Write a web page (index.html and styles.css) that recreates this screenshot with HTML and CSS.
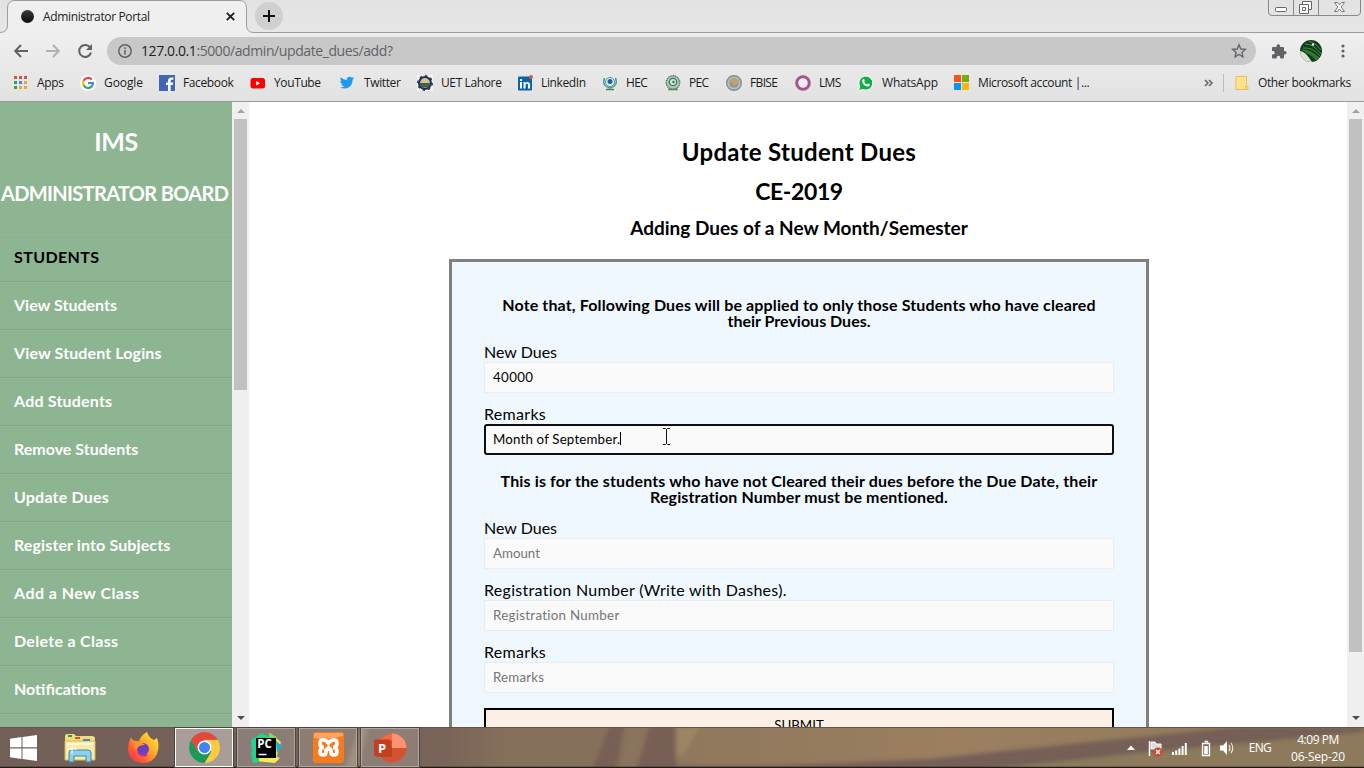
FILE: index.html
```html
<!DOCTYPE html>
<html lang="en">
<head>
<meta charset="utf-8">
<title>Administrator Portal</title>
<link rel="stylesheet" href="styles.css">
</head>
<body>
<div class="screen">
  <header class="browser">
    <div class="tabstrip">
      <svg class="tab-shape" width="1364" height="34" viewBox="0 0 1364 34"><path d="M0 32.5Q7.500 32.500 7.500 25V8Q7.500 .5 15 .5H239Q246.500 .5 246.500 8V25Q246.500 32.500 254 32.500H1364V34H0Z" fill="#efefef"/><path d="M0 32.500Q7.500 32.500 7.500 25V8Q7.500 .5 15 .5H239Q246.500 .5 246.500 8V25Q246.500 32.500 254 32.500H1364" fill="none" stroke="#9d9d9d"/></svg>
      <div class="tab"><i class="favicon"></i><span class="tab-title">Administrator Portal</span>
        <svg class="tab-close" width="9" height="9" viewBox="0 0 9 9"><path d="M.8.8l7.400 7.400M8.200.8L.8 8.200" stroke="#1c1c1c" stroke-width="1.800"/></svg></div>
      <div class="newtab"><svg width="12" height="12" viewBox="0 0 12 12"><path d="M6 0v12M0 6h12" stroke="#111" stroke-width="2"/></svg></div>
      <svg class="win-controls" width="94" height="17" viewBox="0 0 94 17"><path d="M.5 0v12q0 3.500 3.500 3.500h85q3.500 0 3.500-3.500V0M25.500 0v15.500M50.500 0v15.500" fill="none" stroke="#898989"/><rect x="7.500" y="7.500" width="11" height="4" rx="1" fill="#fff" stroke="#666"/><path d="M34.500 4.500v-3h9v8h-3" fill="#fff" stroke="#666"/><path d="M31.500 4.500h9v9h-9z" fill="#fff" stroke="#666"/><path d="M34.500 7.500h3v3h-3z" fill="#fff" stroke="#666"/><path d="M66.500 2.500h3l2 2.500 2-2.500h3l-3.300 4.500 3.300 4.500h-3l-2-2.500-2 2.500h-3L69.800 7z" fill="#fff" stroke="#777"/></svg>
    </div>
    <div class="toolbar">
      <svg width="14" height="14" viewBox="0 0 14 14"><path d="M14 7H1.500M7 1L1.200 7 7 13" fill="none" stroke="#5f6368" stroke-width="2"/></svg>
      <svg width="14" height="14" viewBox="0 0 14 14"><path d="M0 7h12.500M7 1l5.800 6L7 13" fill="none" stroke="#b0b1b3" stroke-width="2"/></svg>
      <svg width="14" height="14" viewBox="0 0 14 14"><path d="M12.300 3.800A6 6 0 1 0 13 8.500" fill="none" stroke="#5f6368" stroke-width="2"/><path d="M14 0v6H8z" fill="#5f6368"/></svg>
      <div class="omnibox">
        <svg width="14" height="14" viewBox="0 0 14 14"><circle cx="7" cy="7" r="6.200" fill="none" stroke="#5f6368" stroke-width="1.500"/><path d="M7 6v4.500M7 3.300v1.600" stroke="#5f6368" stroke-width="1.600"/></svg>
        <span class="url"><b>127.0.0.1</b>:5000/admin/update_dues/add?</span>
        <svg class="star" width="16" height="16" viewBox="0 0 16 16"><path d="M8 1.800l1.800 4.200 4.500.4-3.400 3 1 4.400L8 11.500l-3.900 2.300 1-4.400-3.400-3 4.500-.4z" fill="none" stroke="#5f6368" stroke-width="1.400"/></svg>
      </div>
      <svg class="ext" width="16" height="16" viewBox="0 0 16 16"><path d="M2 4h3.500V3a1.800 1.800 0 0 1 3.600 0v1h2.900q1 0 1 1v2.900h.8a1.800 1.800 0 0 1 0 3.600H13V14.500q0 1-1 1H9.300V14.500a1.800 1.800 0 0 0-3.600 0v1H2q-1 0-1-1V11.500h1a1.800 1.800 0 0 0 0-3.600H1V5q0-1 1-1z" fill="#5f6368"/></svg>
      <svg class="avatar" width="22" height="22" viewBox="0 0 22 22"><defs><clipPath id="av"><circle cx="11" cy="11" r="11"/></clipPath></defs><g clip-path="url(#av)"><path d="M0 0h22v22H0z" fill="#123d1d"/><path d="M0 11q5 0 12 11H0z" fill="#dfe0cf"/><path d="M2 10q9 0 18 9M3 8q10-1 17 8M5 4q9 0 16 10M9 1q8 3 12 9" fill="none" stroke="#4f9152"/><path d="M5 11q8 2 14 11" fill="none" stroke="#2f7b26" stroke-width="3"/><circle cx="13" cy="4.500" r="1.200" fill="#eee"/></g></svg>
      <svg class="dots" width="4" height="14" viewBox="0 0 4 14" fill="#5f6368"><circle cx="2" cy="2" r="1.600"/><circle cx="2" cy="7" r="1.600"/><circle cx="2" cy="12" r="1.600"/></svg>
    </div>
    <nav class="bookmarks">
      <a><svg viewBox="0 0 16 16"><path d="M1 1h3v3H1zM6 1h3v3H6zM11 1h3v3h-3z" fill="#dd5144"/><path d="M1 6h3v3H1zM1 11h3v3H1z" fill="#2da05a"/><path d="M6 6h3v3H6z" fill="#4285f4"/><path d="M11 6h3v3h-3zM11 11h3v3h-3zM6 11h3v3H6z" fill="#e5a93b"/></svg><span>Apps</span></a>
      <a class="google"><svg viewBox="0 0 16 16"><circle cx="8" cy="8" r="8" fill="#fff"/><g fill="none" stroke-width="2.200"><path d="M11.800 4.500A5 5 0 0 0 3.600 5.800" stroke="#ea4335"/><path d="M3.600 5.800a5 5 0 0 0 0 4.500" stroke="#fbbc05"/><path d="M3.600 10.300a5 5 0 0 0 8 1.300" stroke="#34a853"/><path d="M11.500 11.600A5 5 0 0 0 13 8H8" stroke="#4285f4"/></g></svg><span>Google</span></a>
      <a><svg viewBox="0 0 16 16"><path d="M0 0h16v16H0z" fill="#4267b2"/><path d="M9 16v-6H7V7.600h2V6q0-3.500 3.400-3.500h2v2.300H13q-1.400 0-1.400 1.400v1.400h2.600L13.800 10h-2.200v6z" fill="#fff"/></svg><span>Facebook</span></a>
      <a><svg viewBox="0 0 16 16"><rect x=".5" y="3" width="14.500" height="10.500" rx="2.500" fill="#f00"/><path d="M6.200 6l4 2.200-4 2.300z" fill="#fff"/></svg><span>YouTube</span></a>
      <a><svg viewBox="1 0 16 16"><path d="M-1 12.500q2.300.2 4-1.200-2.200-.3-2.700-2.200h1.200Q-.8 8.200-.7 5.900l1.200.3Q-1.400 4.500-.2 2.200 2.200 5 6 5.300 5.500 1.900 8.600 1.700q1.400 0 2.300 1 1-.2 1.800-.8-.3 1-1.200 1.700l1.500-.4q-.5.900-1.400 1.500 0 5-3.600 7.500-4.300 2.600-9 .3" transform="translate(2 0)" fill="#1d9bf0"/></svg><span>Twitter</span></a>
      <a><svg viewBox="0 0 16 16"><path d="M0 0h16v16H0z" fill="#f5f5f2"/><circle cx="8" cy="8" r="6" fill="#b8bea0" stroke="#262f55" stroke-width="2"/><circle cx="8" cy="8" r="7.300" fill="none" stroke="#262f55" stroke-width="1.400" stroke-dasharray="2.400 3.300"/><path d="M3 8h10v3q-5 3-10 0z" fill="#455d55"/><path d="M5 8V5l3-2 3 2v3z" fill="#d6c688"/></svg><span>UET Lahore</span></a>
      <a><svg viewBox="0 0 16 16"><rect x="1" y="1.500" width="14" height="14" rx="1" fill="#0a66a8"/><path d="M3 7h2v6.500H3zM3 4h2v2H3zM6.500 7h2v1q2-2 4 0 .6.700.6 1.700v3.800H11V10q0-1.500-1.200-1.500T8.600 10v3.500H6.500z" fill="#fff"/><circle cx="14" cy="2" r="2" fill="#e6523f"/></svg><span>LinkedIn</span></a>
      <a class="tight"><svg viewBox="0 0 16 16"><circle cx="8" cy="7" r="4.500" fill="#dff1ef" stroke="#5b8cae"/><circle cx="8" cy="6.500" r="2.500" fill="#1f619f"/><path d="M2.500 3Q-.5 11 8 13q8.500-2 5.500-10" fill="none" stroke="#4e9d7c" stroke-width="1.500"/><path d="M4 14.500h8" stroke="#3f8563" stroke-width="1.500"/></svg><span>HEC</span></a>
      <a class="tight"><svg viewBox="0 0 16 16"><circle cx="8" cy="7.500" r="6.700" fill="#aecbb8" stroke="#4c7c65" stroke-width="1.400" stroke-dasharray="1.500 .7"/><circle cx="8" cy="7" r="3.700" fill="#d3e3da" stroke="#447860" stroke-width="1.300"/><circle cx="8.500" cy="7" r="1.300" fill="#447860"/><path d="M3 14.500h10" stroke="#5f8775" stroke-width="1.600"/></svg><span>PEC</span></a>
      <a class="tight"><svg viewBox="0 0 16 16"><circle cx="8" cy="8" r="7.300" fill="#b9bbbb" stroke="#888d92" stroke-width="1.400"/><circle cx="8" cy="8" r="4.700" fill="#8798aa"/><path d="M3 6l5-3 5 2-2 4-3 3-2-4z" fill="#c4a168"/></svg><span>FBISE</span></a>
      <a class="tight"><svg viewBox="0 0 16 16"><circle cx="8" cy="8" r="6.300" fill="#eee" stroke="#a55490" stroke-width="3"/></svg><span>LMS</span></a>
      <a class="whatsapp"><svg viewBox="0 0 16 16"><path d="M.5 15.500l1.200-4A7 7 0 1 1 5 14.500z" fill="#16aa48" stroke="#f5fff8"/><path d="M5 4q1.500-.5 1.700 1.200L6.200 7q.8 1.800 2.700 2.600l1.100-1 2 1q-.3 2.300-2.800 1.900Q5 10.300 4.200 6.500 4.200 5 5 4" fill="#fff"/></svg><span>WhatsApp</span></a>
      <a><svg viewBox="0 0 16 16"><path d="M0 0h7v7H0z" fill="#f65314"/><path d="M8 0h7v7H8z" fill="#7cab0b"/><path d="M0 8h7v7H0z" fill="#0a93f0"/><path d="M8 8h7v7H8z" fill="#ffb60a"/></svg><span>Microsoft account |...</span></a>
      <svg class="more" viewBox="0 0 9 8"><path d="M1 1l3 3-3 3M5 1l3 3-3 3" fill="none" stroke="#5f6368" stroke-width="1.500"/></svg>
      <a class="other"><svg viewBox="0 0 16 16"><path d="M2 1.500h10.500v10h1.500v3H2z" fill="#ffe28b" stroke="#e9bd57"/><path d="M11.500 14.500v-3h2" fill="none" stroke="#e9bd57"/></svg><span>Other bookmarks</span></a>
    </nav>
  </header>

  <main class="page">
    <aside class="sidebar">
      <h1>IMS</h1>
      <h2>ADMINISTRATOR BOARD</h2>
      <ul>
        <li class="group">STUDENTS</li>
        <li>View Students</li>
        <li class="s1">View Student Logins</li>
        <li class="s2">Add Students</li>
        <li>Remove Students</li>
        <li class="s2">Update Dues</li>
        <li class="s1">Register into Subjects</li>
        <li class="s4">Add a New Class</li>
        <li class="s3">Delete a Class</li>
        <li>Notifications</li>
        <li></li>
      </ul>
    </aside>
    <div class="scrollbar side"><i class="up"></i><b></b><i class="down"></i></div>
    <section class="content">
      <h1 class="title">Update Student Dues</h1>
      <h1 class="class-name">CE-2019</h1>
      <h2 class="subtitle">Adding Dues of a New Month/Semester</h2>
      <form class="dues">
        <h4><span>Note that, Following Dues will be applied to only those Students who have cleared</span><br>their Previous Dues.</h4>
        <label>New Dues</label>
        <div class="field value"><span class="amount">40000</span></div>
        <label class="s3">Remarks</label>
        <div class="field value focused"><span>Month of September.</span><i class="caret"></i>
          <svg class="ibeam" width="9" height="17" viewBox="0 0 9 17"><path d="M1 .5h2.500l1 1 1-1H8M1 16.500h2.500l1-1 1 1H8M4.500 1v15" fill="none" stroke="#111"/></svg></div>
        <h4 class="second"><span>This is for the students who have not Cleared their dues before the Due Date, their</span><br><span class="s1">Registration Number must be mentioned.</span></h4>
        <label>New Dues</label>
        <div class="field"><span class="s0">Amount</span></div>
        <label class="s3">Registration Number (Write with Dashes).</label>
        <div class="field"><span class="s3">Registration Number</span></div>
        <label class="s3">Remarks</label>
        <div class="field"><span class="s2">Remarks</span></div>
        <div class="submit">SUBMIT</div>
      </form>
    </section>
    <div class="scrollbar main"><i class="up"></i><b></b><i class="down"></i></div>
  </main>

  <footer class="taskbar">
    <svg class="wallpaper" width="1364" height="41" viewBox="0 0 1364 41" preserveAspectRatio="none">
      <defs><linearGradient id="wall"><stop offset="0" stop-color="#725f58"/><stop offset=".25" stop-color="#75635a"/><stop offset=".33" stop-color="#7a645a"/><stop offset=".37" stop-color="#84705a"/><stop offset=".43" stop-color="#84705b"/><stop offset=".5" stop-color="#8f785d"/><stop offset=".7" stop-color="#9b7f60"/><stop offset="1" stop-color="#8d7a5b"/></linearGradient><filter id="soft"><feGaussianBlur stdDeviation="2"/></filter></defs>
      <path d="M0 0h1364v41H0z" fill="url(#wall)"/>
      <g filter="url(#soft)"><path d="M360 0h8l-9 41h-14z" fill="#8d7a65"/><path d="M610 -3h15l-9 46h-24zM650 -3h26v46h-40z" fill="#785f56"/><path d="M676 0h24l-15 25-9 6z" fill="#9b8562"/><path d="M630 45l46-6q70 1 120-1l134-6 160-17 150-15h124v6L1140 26l-160 19z" fill="#755f57"/><path d="M980 43l160-17L1364 5v38z" fill="#8d7a5b"/></g>
      <path d="M0 .5h1364" stroke="#665449"/><path d="M0 40.500h1364" stroke="#221916" stroke-width="1.500"/>
    </svg>
    <div class="apps">
      <div class="start"><svg width="27" height="26" viewBox="0 0 27 26" fill="#fff"><path d="M0 3.700L11.500 2v10.300H0zM12.500 1.900L27 0v12.300H12.500zM0 13.400h11.500V24L0 22.300zM12.500 13.400H27V26l-14.500-2z"/></svg></div>
      <div class="pin"><svg width="32" height="30" viewBox="0 0 32 30"><path d="M1 3q0-2 2-2h7l2 2h16q3 0 3 3v20H1z" fill="#f1dc82"/><path d="M1 8h30v19H1z" fill="#faeaa9" stroke="#d4b85b"/><path d="M4 2h4v2H4z" fill="#2e9d45"/><path d="M11 4h5v2h-5z" fill="#cb5b2c"/><path d="M19 6h7v2h-7z" fill="#418ec8"/><path d="M3 11h26" stroke="#fff7c8" stroke-width="2"/><path d="M5 29V20q0-3 3-3h16q3 0 3 3v9h-5v-6H10v6z" fill="#8bcfea" stroke="#398ab2"/><path d="M8 11v10M3 16h10" stroke="#fff" stroke-width="1"/></svg></div>
      <div class="pin"><svg width="32" height="32" viewBox="0 0 32 32"><defs><linearGradient id="ff" x1="1" y1="0" x2="0" y2="1"><stop offset="0" stop-color="#fff04b"/><stop offset=".4" stop-color="#ffac27"/><stop offset=".75" stop-color="#ff5038"/><stop offset="1" stop-color="#ef2368"/></linearGradient></defs><path d="M20 0q2 6 7 8l3-2q3 8 0 16-5 10-15 9Q2 30 1 17 1 11 4 5l3 5 5-1q2-6 8-9" fill="url(#ff)"/><circle cx="16" cy="17" r="6" fill="#6b40bd"/><path d="M4 8l6 1q5 1 8 4-7 0-8 4-2-1-3 0-1-4 2-5z" fill="#ff932d"/><path d="M11 20q2 5 9 3" fill="none" stroke="#b434a7" stroke-width="2"/></svg></div>
      <div class="task active"><svg width="31" height="31" viewBox="0 0 32 32"><path d="M16 16v-8h13.800A16 16 0 0 1 16 32L23 20z" fill="#fdca40"/><path d="M16 16l7 4-7 12A16 16 0 0 1 2.200 8L9 20z" fill="#189b57"/><path d="M2.200 8A16 16 0 0 1 29.800 8H16L9 20z" fill="#e2483b"/><circle cx="16" cy="16" r="7.200" fill="#fff"/><circle cx="16" cy="16" r="5.700" fill="#4285f4"/></svg></div>
      <div class="task"><svg width="32" height="32" viewBox="0 0 32 32"><path d="M1 8L12 1l9 5-5 22-13 3z" fill="#23d28b"/><path d="M20 1l11 9-6 20-12-2z" fill="#e2f04c"/><path d="M26 9l6 5-5 7z" fill="#19a9df"/><path d="M5 29l12-8 13 5-5 5z" fill="#f0ed54"/><path d="M19 1l8 4-8 5z" fill="#73df5d"/><path d="M1 20h8v10l-6 1z" fill="#23d28b"/><path d="M6 6h20v20H6z"/><path d="M8.500 22.500h8" stroke="#fff" stroke-width="1.500"/><text x="7.300" y="16" class="logo-pc">PC</text></svg></div>
      <div class="task"><svg width="31" height="31" viewBox="0 0 31 31"><rect width="31" height="31" rx="3" fill="#f67b1d"/><path d="M1 1h29v3q-14 5-29 2z" fill="#fba568"/><path d="M11 15.500Q7 15.500 7 11.500 7 8 10 8q3 0 5.500 3Q18 8 21 8q3 0 3 3.500 0 4-4 4 4 0 4 4 0 3.500-3 3.500t-3-3V18l-2.500-2.500L13 18v2q0 3-3 3t-3-3.500q0-4 4-4" fill="none" stroke="#fff" stroke-width="3.700"/></svg></div>
      <div class="task"><svg width="33" height="30" viewBox="0 0 33 30"><circle cx="18" cy="15" r="14.500" fill="#d95a36"/><path d="M18 .5A14.500 14.500 0 0 1 32.500 15H18z" fill="#ff9270"/><path d="M18 15h14.500A14.500 14.500 0 0 1 5 21z" fill="#d35230"/><path d="M18 .5V15L4 18Q3 3 18 .5" fill="#ed6c47"/><path d="M2 8h16v16H2z" fill="#8e351e" opacity=".45"/><rect y="6.500" width="16.500" height="16.500" rx="1" fill="#c53e1d"/><text x="4" y="19.500" class="logo-p">P</text></svg></div>
    </div>
    <div class="tray">
      <svg width="110" height="18" viewBox="0 0 110 18"><path d="M1 11l4-4.500L9 11z" fill="#fff"/><path d="M23.500 2v15" stroke="#fff" stroke-width="1.500"/><path d="M25 3h4l1 2h5v7h-5l-1-2h-4z" fill="#ddd" stroke="#fff"/><circle cx="32" cy="13" r="4.600" fill="#d9412c"/><path d="M30 11l4 4M34 11l-4 4" stroke="#fff" stroke-width="1.500"/><path d="M46 13h2v3h-2zM49.200 11.500h2V16h-2zM52.400 9.500h2V16h-2zM55.600 7h2v9h-2zM58.800 4h2v12h-2z" fill="#fff"/><path d="M76.500 4.500h7v12h-7zM78.500 2.500h3v2" fill="none" stroke="#fff" stroke-width="1.300"/><path d="M78.200 7h3.600v8h-3.600z" fill="#fff"/><path d="M94 6.500h3l4-4.500v14l-4-4.500h-3z" fill="#fff"/><path d="M103 6q2 3 0 6M105 4q3.500 5 0 10" fill="none" stroke="#f4eee8" stroke-width="1.100"/></svg>
      <span class="lang">ENG</span>
      <div class="clock"><span class="time">4:09 PM</span><span>06-Sep-20</span></div>
    </div>
  </footer>
</div>
</body>
</html>
```

FILE: styles.css
```css
* { box-sizing: border-box; }
body { margin: 0; font-family: "Open Sans", "Liberation Sans", sans-serif; }
h1, h2, h4, ul { margin: 0; padding: 0; }
svg { display: block; flex: none; overflow: visible; }
.screen { width: 1364px; height: 768px; display: flex; flex-direction: column; overflow: hidden; }

/* letter-spacing steps shared by the menu and the form */
.s0 { letter-spacing: 0; }
.s1 { letter-spacing: .12px; }
.s2 { letter-spacing: .2px; }
.s3 { letter-spacing: .3px; }
.s4 { letter-spacing: .45px; }

.browser { height: 102px; flex: none; display: flex; flex-direction: column; background: linear-gradient(#efefef 33px, #e2e2e2); border-bottom: 1px solid #9b9b9b; }
.tabstrip { height: 33px; display: flex; position: relative; background: linear-gradient(#e2e2e2, #e7e7e7); }
.tab-shape { position: absolute; left: 0; top: 0; }
.tab { position: relative; width: 247px; height: 32px; padding: 0 12px 0 21px; display: flex; align-items: center; font-size: 12px; color: #222; }
.tab-title { letter-spacing: -.36px; }
.favicon { width: 13px; height: 13px; border-radius: 50%; background: linear-gradient(#3a3a3a, #0c0c0c); margin-right: 9px; }
.tab-close { margin-left: auto; }
.newtab { position: relative; width: 28px; height: 28px; margin: 2px 0 0 8px; border-radius: 50%; background: #d0d0d0; display: flex; align-items: center; justify-content: center; }
.win-controls { position: relative; margin: 0 2px 0 auto; }
.toolbar { height: 36px; padding: 0 18px 0 14px; display: flex; align-items: center; gap: 18px; }
.omnibox { width: 1149px; height: 28px; margin-left: -3px; padding: 0 9px 0 11px; border-radius: 14px; background: #c8c8c8; display: flex; align-items: center; }
.url { margin-left: 9px; padding-bottom: 1px; font-size: 14px; letter-spacing: -.41px; color: #5f6368; white-space: nowrap; }
.url b { font-weight: 400; color: #222; }
.star { margin-left: auto; }
.ext { margin-left: -3px; }
.avatar { margin-left: -5px; }
.dots { margin-left: 1px; }
.bookmarks { height: 32px; margin-top: -3px; padding-left: 13px; padding-top: 1px; display: grid; grid-template-columns: 67px 79px 91px 90px 77px 100px 85px 63px 61px 69px 63px 96px 250px 19px 141px; align-items: center; font-size: 12px; letter-spacing: -.38px; color: #1b1b1b; }
.bookmarks a { display: flex; align-items: center; gap: 8px; white-space: nowrap; }
.bookmarks a svg { width: 16px; height: 16px; }
.bookmarks span { padding-bottom: 1px; }
.bookmarks .google { letter-spacing: -.09px; }
.bookmarks .whatsapp { letter-spacing: -.2px; }
.bookmarks .tight { letter-spacing: -.65px; }
.more { width: 9px; height: 8px; }
.bookmarks .other { border-left: 1px solid #bbb; padding-left: 10px; }

.page { height: 625px; flex: none; display: flex; background: #fff; font-family: Lato, "Open Sans", sans-serif; }
.sidebar { width: 232px; height: 625px; overflow: hidden; background: #8db591; color: #fff; }
.sidebar h1 { margin-top: 24px; text-align: center; font-size: 25px; line-height: 30px; letter-spacing: -.38px; }
.sidebar h2 { margin-top: 25px; padding-left: 1px; font-size: 20px; line-height: 24px; letter-spacing: -.66px; white-space: nowrap; }
.sidebar ul { margin-top: 29px; list-style: none; }
.sidebar li { height: 48px; padding-left: 14px; border-top: 1px solid #93ba97; border-bottom: 1px solid #84aa88; font-size: 16px; line-height: 43px; font-weight: 700; white-space: nowrap; }
.sidebar .group { color: #000; letter-spacing: .38px; }
.scrollbar { width: 17px; flex: none; padding: 0 2px; display: flex; flex-direction: column; align-items: center; background: #f0f0f0; }
.scrollbar b { width: 13px; background: #c1c1c1; }
.side b { height: 271px; }
.main b { height: 533px; }
.scrollbar i { border: 4px solid transparent; }
.scrollbar .up { margin: 3px 0 6px; border-bottom-color: #a3a3a3; }
.scrollbar .down { margin: auto 0 3px; border-top-color: #505050; }

.content { width: 1098px; height: 625px; padding-left: 2px; overflow: hidden; display: flex; flex-direction: column; align-items: center; color: #000; }
.title { margin-top: 33px; font-size: 24px; line-height: 34px; letter-spacing: .29px; }
.class-name { margin-top: 5px; font-size: 23px; line-height: 34px; letter-spacing: -.4px; }
.subtitle { margin-top: 8px; font-size: 19px; line-height: 24px; }
.dues { width: 700px; height: 560px; flex: none; margin-top: 19px; padding: 35px 32px 0; border: 3px solid #808080; background: #f0f8ff; }
.dues h4 { margin-bottom: 14px; padding-bottom: 1px; text-align: center; font-size: 16px; line-height: 16px; white-space: nowrap; }
.dues h4 span { letter-spacing: .135px; }
.dues .second { margin-top: 18px; }
.dues label { display: block; height: 18px; font-size: 16px; line-height: 16px; white-space: nowrap; }
.field { position: relative; height: 31px; margin-bottom: 13px; padding: 0 8px 2px; display: flex; align-items: center; border: 1px solid #ececec; background: #fafafa; font-size: 13.300px; color: #757575; white-space: nowrap; }
.value { color: #000; letter-spacing: .17px; }
.amount { letter-spacing: .36px; }
.focused { border: 2px solid #101010; border-radius: 3px; padding: 0 7px 2px; }
.caret { width: 1px; height: 13px; background: #000; }
.ibeam { position: absolute; left: 176px; top: 2px; }
.submit { height: 36px; margin-top: 15px; border: 2px solid #000; background: #faf0e6; text-align: center; font-size: 13.300px; line-height: 31px; }

.taskbar { position: relative; height: 41px; display: flex; justify-content: space-between; overflow: hidden; }
.wallpaper { position: absolute; left: 0; top: 0; }
.apps { position: relative; height: 40px; display: flex; padding-top: 1px; }
.apps > div { display: flex; align-items: center; justify-content: center; height: 39px; }
.start { width: 49px; padding-right: 2px; }
.pin { width: 62px; margin-right: 1px; }
.pin svg { margin-right: 1px; }
.task { width: 58px; margin-right: 4px; border: 1px solid #b3a6a0; background: rgba(255, 255, 255, .17); outline: 1px solid #4e433d; }
.task.active { border: 1px solid #fff; background: rgba(255, 255, 255, .38); }
.logo-pc { font: 700 11.500px "Open Sans", sans-serif; fill: #fff; }
.logo-p { font: 700 13px "Open Sans", sans-serif; fill: #fff; }
.tray { position: relative; display: flex; align-items: center; padding-right: 19px; color: #fff; font-size: 12px; letter-spacing: -.23px; white-space: nowrap; }
.lang { margin-left: 13px; letter-spacing: -.7px; }
.time { letter-spacing: -.48px; }
.clock { width: 54px; margin-left: 20px; display: flex; flex-direction: column; align-items: center; line-height: 17px; }
```
